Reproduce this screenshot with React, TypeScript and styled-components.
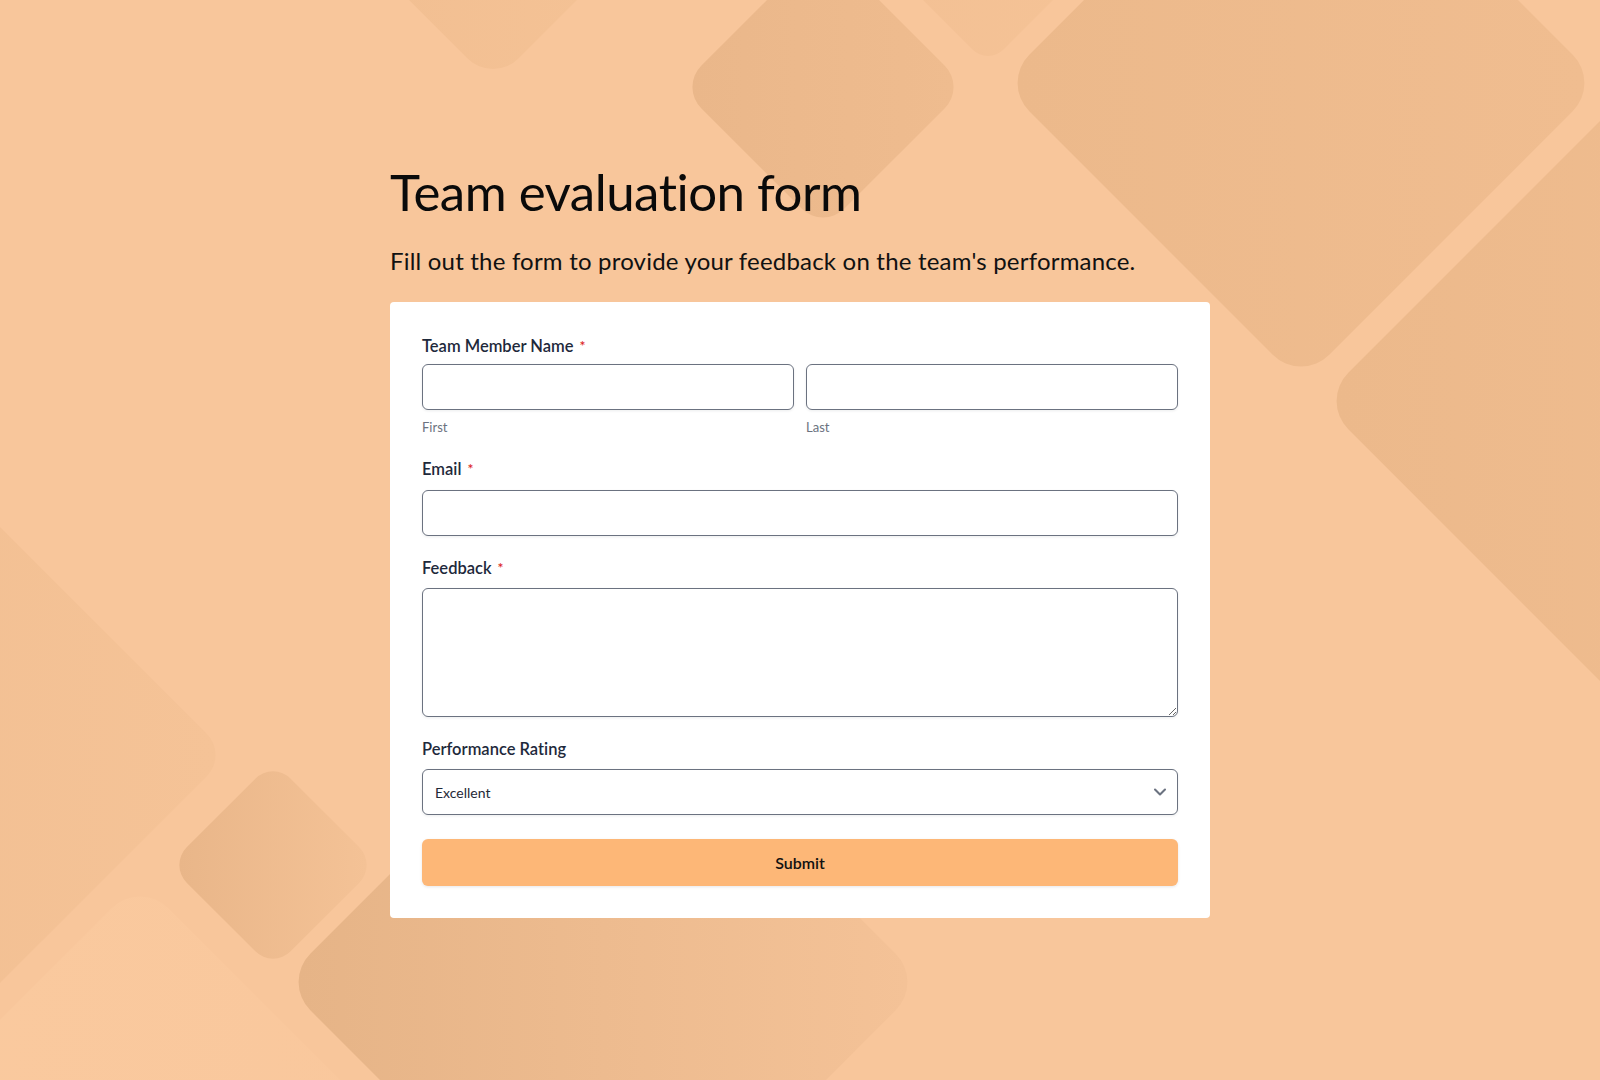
import React from "react";
import styled, { createGlobalStyle } from "styled-components";
import { ChevronDown } from "lucide-react";

const GlobalStyle = createGlobalStyle`
  html, body {
    margin: 0;
    padding: 0;
    background: #f8c69b;
  }
  body {
    font-family: Lato, "Noto Sans", "Liberation Sans", sans-serif;
    -webkit-font-smoothing: antialiased;
    font-variant-ligatures: none;
  }
  * { box-sizing: border-box; }
`;

const Page = styled.div`
  position: relative;
  width: 100%;
  min-height: 1080px;
  overflow: hidden;
  background: #f8c69b;
  display: flex;
  justify-content: center;
`;

const Backdrop = styled.svg`
  position: absolute;
  top: 0;
  left: 0;
  width: 1600px;
  height: 1080px;
  z-index: 0;
  pointer-events: none;
`;

const Container = styled.main`
  position: relative;
  z-index: 1;
  width: 820px;
  padding-top: 161px;
  padding-bottom: 160px;
`;

const Title = styled.h1`
  margin: 0;
  font-family: Lato, "Liberation Sans", sans-serif;
  font-weight: 400;
  font-size: 51px;
  line-height: 61px;
  letter-spacing: -0.5px;
  color: #0a0a0a;
  font-variant-ligatures: none;
`;

const Subtitle = styled.p`
  margin: 23px 0 0;
  font-size: 24px;
  line-height: 32px;
  letter-spacing: 0.2px;
  font-weight: 400;
  color: #111111;
`;

const Card = styled.form`
  margin-top: 25px;
  background: #ffffff;
  border-radius: 4px;
  padding: 34px 32px 32px;
  display: flex;
  flex-direction: column;
`;

const Field = styled.div<{ $space: number }>`
  display: flex;
  flex-direction: column;
  margin-bottom: ${(p) => p.$space}px;
`;

const Label = styled.label<{ $gap: number }>`
  display: block;
  font-size: 16.5px;
  line-height: 20px;
  font-weight: 600;
  color: #1e293b;
  margin-bottom: ${(p) => p.$gap}px;
`;

const Required = styled.span`
  color: #dc2626;
  font-size: 14px;
  margin-left: 6px;
  vertical-align: 1px;
`;

const NameRow = styled.div`
  display: grid;
  grid-template-columns: 1fr 1fr;
  column-gap: 12px;
`;

const NamePart = styled.div`
  display: flex;
  flex-direction: column;
`;

const inputBase = `
  width: 100%;
  border: 1px solid #6b7280;
  border-radius: 6px;
  background: #ffffff;
  box-shadow: 0 1px 3px rgba(15, 23, 42, 0.08);
  font-family: Lato, "Liberation Sans", sans-serif;
  font-size: 14px;
  color: #1f2937;
  outline: none;
`;

const TextInput = styled.input`
  ${inputBase}
  height: 46px;
  padding: 0 12px;
`;

const TextArea = styled.textarea`
  ${inputBase}
  display: block;
  height: 129px;
  padding: 10px 12px;
  resize: vertical;
`;

const SubLabel = styled.span`
  margin-top: 8px;
  font-size: 13px;
  line-height: 18px;
  color: #6b7280;
`;

const SelectWrap = styled.div`
  position: relative;
`;

const Select = styled.select`
  ${inputBase}
  height: 46px;
  padding: 0 36px 0 12px;
  appearance: none;
  -webkit-appearance: none;
`;

const Chevron = styled.span`
  position: absolute;
  right: 8px;
  top: 50%;
  transform: translateY(-50%);
  display: flex;
  color: #6b7280;
  pointer-events: none;
`;

const SubmitButton = styled.button`
  height: 47px;
  width: 100%;
  border: none;
  border-radius: 6px;
  background: #fdb777;
  box-shadow: 0 1px 3px rgba(15, 23, 42, 0.1);
  font-family: Lato, "Liberation Sans", sans-serif;
  font-size: 16px;
  font-weight: 600;
  color: #111111;
  cursor: pointer;
`;

type Diamond = {
  cx: number;
  cy: number;
  d: number;
  r: number;
  from: string;
  to: string;
};

const diamonds: Diamond[] = [
  { cx: 493, cy: -116, d: 200, r: 36, from: "#f1be91", to: "#f5c396" },
  { cx: 988, cy: -85, d: 150, r: 22, from: "#f3c094", to: "#f5c396" },
  { cx: 823, cy: 87, d: 143, r: 30, from: "#eab78a", to: "#efbc8f" },
  { cx: 1301, cy: 83, d: 300, r: 40, from: "#ecb98b", to: "#f0bd90" },
  { cx: 1640, cy: 401, d: 320, r: 40, from: "#ecb98b", to: "#f1be91" },
  { cx: -172, cy: 755, d: 400, r: 30, from: "#eebb8d", to: "#f5c397" },
  { cx: 140, cy: 1290, d: 410, r: 40, from: "#faca9f", to: "#f9c79c" },
  { cx: 273, cy: 865, d: 104, r: 25, from: "#e9b689", to: "#f4c296" },
  { cx: 603, cy: 982, d: 321, r: 40, from: "#e6b487", to: "#f4c297" },
];

function diamondPath({ cx, cy, d, r }: Diamond): string {
  const k = r / Math.SQRT2;
  const tx = cx, ty = cy - d;
  const rx = cx + d, ry = cy;
  const bx = cx, by = cy + d;
  const lx = cx - d, ly = cy;
  return [
    `M ${tx + k} ${ty + k}`,
    `L ${rx - k} ${ry - k}`,
    `A ${r} ${r} 0 0 1 ${rx - k} ${ry + k}`,
    `L ${bx + k} ${by - k}`,
    `A ${r} ${r} 0 0 1 ${bx - k} ${by - k}`,
    `L ${lx + k} ${ly + k}`,
    `A ${r} ${r} 0 0 1 ${lx + k} ${ly - k}`,
    `L ${tx - k} ${ty + k}`,
    `A ${r} ${r} 0 0 1 ${tx + k} ${ty + k}`,
    "Z",
  ].join(" ");
}

function BackgroundArt() {
  return (
    <Backdrop viewBox="0 0 1600 1080" aria-hidden="true">
      <defs>
        {diamonds.map((s, i) => (
          <linearGradient key={i} id={`dg${i}`} x1="0" y1="0" x2="1" y2="0">
            <stop offset="0" stopColor={s.from} />
            <stop offset="1" stopColor={s.to} />
          </linearGradient>
        ))}
      </defs>
      {diamonds.map((s, i) => (
        <path key={i} d={diamondPath(s)} fill={`url(#dg${i})`} />
      ))}
    </Backdrop>
  );
}

export default function App() {
  return (
    <>
      <GlobalStyle />
      <Page>
        <BackgroundArt />
        <Container>
          <Title>Team evaluation form</Title>
          <Subtitle>
            Fill out the form to provide your feedback on the team's performance.
          </Subtitle>
          <Card onSubmit={(e) => e.preventDefault()}>
            <Field $space={23}>
              <Label $gap={8}>
                Team Member Name<Required>*</Required>
              </Label>
              <NameRow>
                <NamePart>
                  <TextInput type="text" aria-label="First name" />
                  <SubLabel>First</SubLabel>
                </NamePart>
                <NamePart>
                  <TextInput type="text" aria-label="Last name" />
                  <SubLabel>Last</SubLabel>
                </NamePart>
              </NameRow>
            </Field>
            <Field $space={22}>
              <Label $gap={11}>
                Email<Required>*</Required>
              </Label>
              <TextInput type="email" aria-label="Email" />
            </Field>
            <Field $space={22}>
              <Label $gap={10}>
                Feedback<Required>*</Required>
              </Label>
              <TextArea aria-label="Feedback" />
            </Field>
            <Field $space={24}>
              <Label $gap={10}>Performance Rating</Label>
              <SelectWrap>
                <Select defaultValue="Excellent" aria-label="Performance Rating">
                  <option>Excellent</option>
                  <option>Good</option>
                  <option>Average</option>
                  <option>Poor</option>
                </Select>
                <Chevron>
                  <ChevronDown size={20} strokeWidth={2.5} />
                </Chevron>
              </SelectWrap>
            </Field>
            <SubmitButton type="submit">Submit</SubmitButton>
          </Card>
        </Container>
      </Page>
    </>
  );
}
